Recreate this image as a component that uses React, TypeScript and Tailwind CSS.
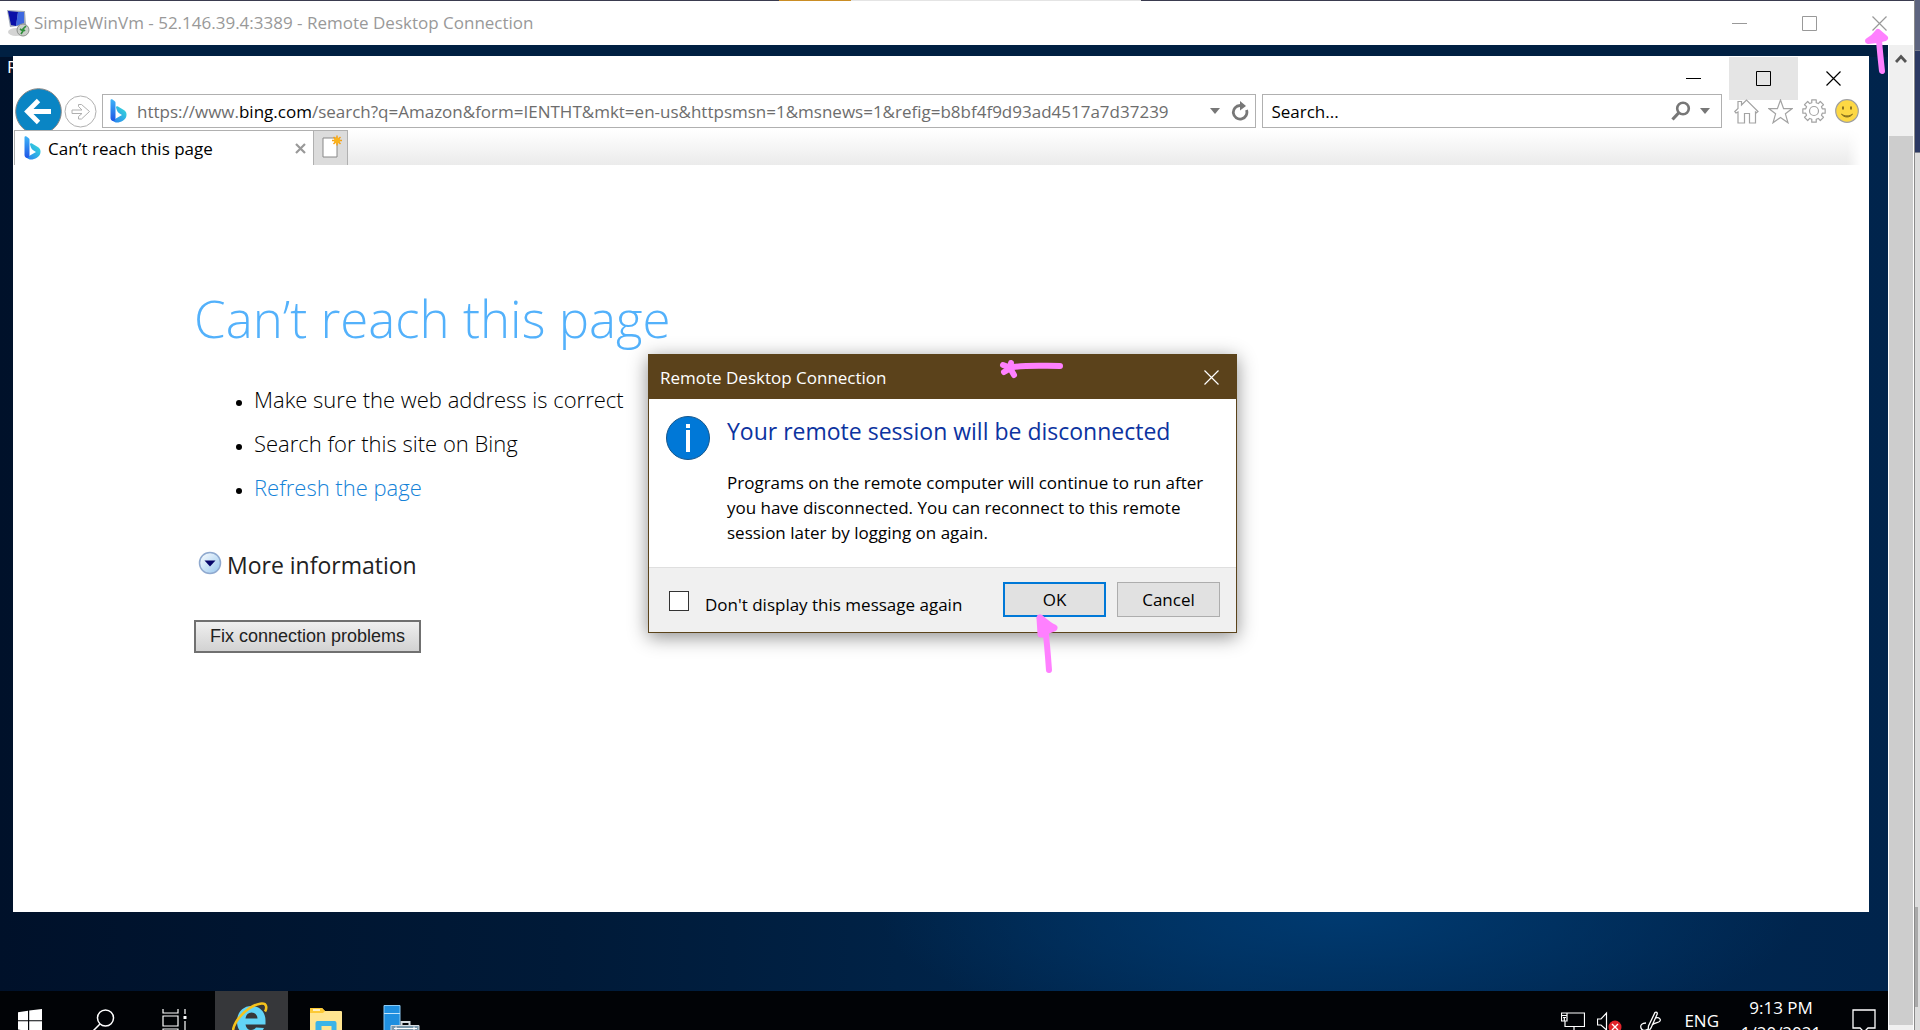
import React from "react";

const FONT = "font-['Open_Sans','Noto_Sans',sans-serif]";

function RdpIcon() {
  return (
    <svg width="24" height="28" viewBox="0 0 24 28" aria-hidden="true">
      <path d="M1 1 L19 2 L20 16 L4 18 Z" fill="#9fa8b8" />
      <path d="M2 2 L12 3 L10 17 L5 16 Z" fill="#0a10a8" />
      <path d="M12 3 L18 3 L18 14 L10 17 Z" fill="#3d67e0" />
      <ellipse cx="10" cy="23" rx="8" ry="4" fill="#d4d4d4" />
      <circle cx="17" cy="21" r="6" fill="#c9cdc9" stroke="#8d918d" />
      <path d="M14 20l3 2-2 3M20 17l-3 3 2 2" stroke="#2f8f3a" strokeWidth="1.6" fill="none" />
    </svg>
  );
}

function BingIcon() {
  return (
    <svg width="17" height="24" viewBox="0 0 17 24" aria-hidden="true">
      <defs>
        <linearGradient id="bingStem" x1="0" y1="0" x2="0" y2="1">
          <stop offset="0" stopColor="#3cb4f8" />
          <stop offset="1" stopColor="#1f55e6" />
        </linearGradient>
        <linearGradient id="bingBowl" x1="1" y1="0" x2="0" y2="1">
          <stop offset="0" stopColor="#35e0d8" />
          <stop offset="1" stopColor="#2a7cf2" />
        </linearGradient>
      </defs>
      <path d="M6 8.500 C6 7.500 7 7 8 7.600 L13 10.400 C16 12 17 14 16.400 17 C15.600 21 11 23.500 7 23.500 C3.500 23.500 1.500 21 1.500 19 L5 20 L12 16 C9 14.500 7.500 13 6.800 11 Z" fill="url(#bingBowl)" />
      <path d="M0.500 1.500 C0.500 0.300 1.500 0 2.500 0.600 L4.500 2 C5.200 2.600 5.500 3 5.500 4 L5.500 19 C5.500 21 4.500 22 3.200 22 C1.500 22 0.500 20.500 0.500 19 Z" fill="url(#bingStem)" />
    </svg>
  );
}

function Minimize() {
  return (
    <svg width="15" height="15" viewBox="0 0 15 15" aria-hidden="true">
      <path d="M0 7.500h15" stroke="currentColor" />
    </svg>
  );
}

function Maximize() {
  return (
    <svg width="15" height="15" viewBox="0 0 15 15" aria-hidden="true">
      <path d="M0.500 0.500h14v14h-14z" stroke="currentColor" fill="none" />
    </svg>
  );
}

function Close() {
  return (
    <svg width="15" height="15" viewBox="0 0 15 15" aria-hidden="true">
      <path d="M0.500 0.500l14 14M14.500 0.500l-14 14" stroke="currentColor" strokeWidth="1.2" fill="none" />
    </svg>
  );
}

function TitleBar() {
  return (
    <header className="flex h-11 shrink-0 items-center bg-white pl-1.5">
      <RdpIcon />
      <h1 className="ml-1 flex-1 truncate text-[17px] text-[#999]">
        SimpleWinVm - 52.146.39.4:3389 - Remote Desktop Connection
      </h1>
      <div className="flex h-full text-[#999]">
        <button aria-label="Minimize" className="flex w-[70px] items-center justify-center"><Minimize /></button>
        <button aria-label="Maximize" className="flex w-[70px] items-center justify-center"><Maximize /></button>
        <button aria-label="Close" className="flex w-[70px] items-center justify-center"><Close /></button>
      </div>
    </header>
  );
}

function ScrollBar() {
  return (
    <div className="flex w-[26px] shrink-0 flex-col border-x border-white bg-[#f0f0f0]">
      <button aria-label="Scroll up" className="flex h-[91px] shrink-0 justify-center pt-[9px]">
        <svg width="12" height="10" viewBox="0 0 12 10" aria-hidden="true">
          <path d="M1 8L6 2.500L11 8" stroke="#555" strokeWidth="2.800" fill="none" />
        </svg>
      </button>
      <div className="mb-[5px] flex-1 bg-[#cdcdcd]" />
    </div>
  );
}

function ToolIcons() {
  const gear = Array.from({ length: 8 }, (_, i) => {
    const a = (i * Math.PI) / 4;
    const p = (r: number, d: number) =>
      `${(12 + r * Math.cos(a + d)).toFixed(2)} ${(12 + r * Math.sin(a + d)).toFixed(2)}`;
    return `${i ? "L" : "M"}${p(8.6, -0.26)} L${p(11.4, -0.2)} L${p(11.4, 0.2)} L${p(8.6, 0.26)}`;
  }).join(" ");
  return (
    <div className="ml-3 flex shrink-0 items-center gap-[9px] pr-[10px]">
      <button aria-label="Home">
        <svg width="25" height="25" viewBox="0 0 25 25" fill="none" stroke="#a3a3a3" strokeWidth="1.200" aria-hidden="true">
          <path d="M0.800 12.500L4 9.500V2.500H7.500V6L12.500 1L24 12.500L22.500 13.800L21.500 13V24H15.500V14.500H10.500V24H4V13L2 14Z" />
        </svg>
      </button>
      <button aria-label="Favorites">
        <svg width="25" height="25" viewBox="0 0 25 25" fill="none" stroke="#a3a3a3" strokeWidth="1.200" aria-hidden="true">
          <path d="M12.500 1L15.600 9.600H24.200L17.400 14.800L20 23.800L12.500 18.500L5 23.800L7.600 14.800L0.800 9.600H9.400Z" />
        </svg>
      </button>
      <button aria-label="Settings">
        <svg width="24" height="24" viewBox="0 0 24 24" fill="none" stroke="#a3a3a3" strokeWidth="1.200" strokeLinejoin="round" aria-hidden="true">
          <path d={gear + "Z"} />
          <circle cx="12" cy="12" r="4.500" />
        </svg>
      </button>
      <button aria-label="Send feedback">
        <svg width="24" height="24" viewBox="0 0 24 24" aria-hidden="true">
          <circle cx="12" cy="12" r="11.300" fill="#fdd844" stroke="#a0a0a0" strokeWidth="1.200" />
          <path d="M8 7.500v3M16 7.500v3" stroke="#8a7320" strokeWidth="2" />
          <path d="M6.500 15c2.500 4 8.500 4 11 0c-2.500 2.500-8.500 2.500-11 0z" fill="#8a7320" stroke="#8a7320" />
        </svg>
      </button>
    </div>
  );
}

function Browser() {
  return (
    <main className="relative mb-[79px] ml-[13px] mr-[19px] mt-[11px] flex flex-1 flex-col bg-white">
      <div className="flex h-[37px] justify-end pt-px">
        <button aria-label="Minimize browser" className="flex h-[43px] w-[71px] items-center justify-center"><Minimize /></button>
        <button aria-label="Maximize browser" className="flex h-[43px] w-[69px] items-center justify-center bg-[#e5e5e5]"><Maximize /></button>
        <button aria-label="Close browser" className="flex h-[43px] w-[71px] items-center justify-center"><Close /></button>
      </div>

      <div className="relative flex h-9 items-center pl-0.5">
        <button aria-label="Back" className="-my-2 shrink-0">
          <svg width="47" height="47" viewBox="0 0 47 47" aria-hidden="true">
            <circle cx="23.500" cy="23.500" r="22.800" fill="#0a85c4" stroke="#868686" />
            <path d="M36 23.500H13M23.500 12.500L12.500 23.500L23.500 34.500" stroke="#fff" strokeWidth="4.800" fill="none" />
          </svg>
        </button>
        <button aria-label="Forward" className="ml-0.5 shrink-0">
          <svg width="33" height="33" viewBox="0 0 33 33" fill="none" stroke="#b0b0b0" aria-hidden="true">
            <circle cx="16.500" cy="16.500" r="15.500" />
            <path d="M8 15H18L14.500 11.500V9.500H17.500L25.500 16.500L17.500 24H14.500V21.500L18 18.500H8Z" />
          </svg>
        </button>
        <div className="ml-[5px] flex h-[34px] min-w-0 flex-[1154] items-center border border-[#b0b0b0] bg-white pl-[7px]">
          <BingIcon />
          <div
            role="textbox"
            aria-label="Address"
            contentEditable
            suppressContentEditableWarning
            className="ml-[10px] min-w-0 flex-1 overflow-hidden whitespace-nowrap pt-0.5 text-[17px] leading-7 text-[#6d6d6d] outline-none"
          >
            https://www.<span className="text-black">bing.com</span>/search?q=Amazon&amp;form=IENTHT&amp;mkt=en-us&amp;httpsmsn=1&amp;msnews=1&amp;refig=b8bf4f9d93ad4517a7d37239
          </div>
          <button aria-label="Show address history" className="flex w-8 justify-center">
            <svg width="10" height="6" viewBox="0 0 10 6" aria-hidden="true"><path d="M0 0h10l-5 6z" fill="#777" /></svg>
          </button>
          <button aria-label="Refresh" className="mr-1.5 shrink-0">
            <svg width="18" height="20" viewBox="0 0 18 20" aria-hidden="true">
              <path d="M9 4.500A6.800 6.800 0 1 0 15.500 9" stroke="#777" strokeWidth="2.800" fill="none" />
              <path d="M9 0L15 5L9 9.500Z" fill="#777" />
            </svg>
          </button>
        </div>
        <div className="ml-1.5 flex h-[34px] min-w-0 flex-[461] items-center border border-[#b0b0b0] bg-white">
          <input
            aria-label="Search"
            placeholder="Search..."
            className="min-w-0 flex-1 px-2 pt-0.5 text-[17px] text-black outline-none placeholder:text-black"
          />
          <button aria-label="Run search" className="shrink-0">
            <svg width="20" height="20" viewBox="0 0 20 20" fill="none" stroke="#777" aria-hidden="true">
              <circle cx="12" cy="7.500" r="5.800" strokeWidth="2.600" />
              <path d="M8 11.500L1.500 18.500" strokeWidth="3.200" />
            </svg>
          </button>
          <button aria-label="Search providers" className="ml-[9px] mr-[11px] shrink-0">
            <svg width="10" height="6" viewBox="0 0 10 6" aria-hidden="true"><path d="M0 0h10l-5 6z" fill="#777" /></svg>
          </button>
        </div>
        <ToolIcons />
      </div>

      <div className="relative mr-2 mt-px flex h-[35px] bg-white">
        <div className="ml-px flex w-[299px] items-center border-l border-t border-[#b0b0b0] bg-white pl-[9px]">
          <BingIcon />
          <span className="ml-[7px] flex-1 truncate pt-0.5 text-[17px] text-black">Can’t reach this page</span>
          <button aria-label="Close tab" className="mr-[7px]">
            <svg width="11" height="11" viewBox="0 0 11 11" aria-hidden="true">
              <path d="M1 1l9 9M10 1l-9 9" stroke="#999" strokeWidth="2.200" />
            </svg>
          </button>
        </div>
        <button aria-label="New tab" className="flex w-[35px] items-start justify-center border border-b-0 border-[#b0b0b0] bg-[#dcdcdc] pl-0.5 pt-1">
          <svg width="20" height="24" viewBox="0 0 20 24" aria-hidden="true">
            <path d="M1 3h14v19h-14z" fill="#fff" stroke="#888" />
            <path d="M15 0.500v10M10 5.500h10M11.500 2l7 7M18.500 2l-7 7" stroke="#f5a216" strokeWidth="1.500" />
            <circle cx="15" cy="5.500" r="3" fill="#fbb31c" />
          </svg>
        </button>
        <div className="flex-1 bg-linear-to-b from-white to-[#ebebeb] [mask-image:linear-gradient(90deg,#000_calc(100%-14px),transparent)]" />
      </div>

      <section className="flex flex-col items-start pl-[181px] pt-[117px]">
        <h2 className="text-[51px] font-light leading-[72px] text-[#53b1fb]">Can’t reach this page</h2>
        <ul className="mt-[23px] list-disc pl-[60px] text-[22px] font-light leading-[44px] text-black marker:text-[16px]">
          <li>Make sure the web address is correct</li>
          <li>Search for this site on Bing</li>
          <li><a href="#refresh" className="text-[#1482d8]">Refresh the page</a></li>
        </ul>
        <button className="mt-[38px] flex items-center gap-[5px] pl-1 text-[23px] leading-9 text-[#222]">
          <svg width="24" height="24" viewBox="0 0 24 24" className="mb-1" aria-hidden="true">
            <defs>
              <linearGradient id="expander" x1="0" y1="0" x2="1" y2="1">
                <stop offset="0" stopColor="#fff" />
                <stop offset="1" stopColor="#96c6ee" />
              </linearGradient>
            </defs>
            <circle cx="12" cy="12" r="10.500" fill="url(#expander)" stroke="#8fa9cf" strokeWidth="1.500" />
            <path d="M6.500 9.500h11l-5.500 6z" fill="#06066a" />
          </svg>
          More information
        </button>
        <button className="mt-[37px] h-[33px] border-2 border-[#707070] bg-linear-to-b from-[#efefef] to-[#d2d2d2] px-[14px] font-['Liberation_Sans',sans-serif] text-[18px] leading-[29px] text-[#222]">
          Fix connection problems
        </button>
      </section>
    </main>
  );
}

function Taskbar() {
  return (
    <footer className="flex h-[39px] shrink-0 items-start overflow-hidden bg-[#010306] text-white">
      <button aria-label="Start" className="flex w-[60px] justify-center pt-[18px]">
        <svg width="24" height="24" viewBox="0 0 24 24" fill="#fff" aria-hidden="true">
          <path d="M0 3.200L10 1.700V11.200H0zM11.200 1.500L24 0V11.200H11.200zM0 12.300H10V22L0 20.600zM11.200 12.300H24V24L11.200 22.200z" />
        </svg>
      </button>
      <button aria-label="Search Windows" className="flex w-[86px] justify-center pt-[18px]">
        <svg width="24" height="26" viewBox="0 0 24 26" fill="none" stroke="#fff" strokeWidth="1.500" aria-hidden="true">
          <circle cx="14.500" cy="9" r="8" /><path d="M9 15L0.500 23.500" />
        </svg>
      </button>
      <button aria-label="Task view" className="flex w-[58px] justify-center pt-[18px]">
        <svg width="26" height="24" viewBox="0 0 26 24" fill="none" stroke="#fff" strokeWidth="1.200" aria-hidden="true">
          <path d="M1 0V4H16V0M1 7H16V17H1ZM1 24V20H16V24M23 0V5M23 12V24" />
          <path d="M21.500 7h3v3h-3z" fill="#fff" stroke="none" />
        </svg>
      </button>
      <button aria-label="Internet Explorer" className="ml-[11px] flex h-full w-[73px] justify-center bg-[#36373a] pr-1 pt-[11px]">
        <svg width="36" height="36" viewBox="0 0 36 36" aria-hidden="true">
          <path d="M28.500 22.500H13.500C14 26 16 28 19 28C21.500 28 23 27 24 25.500L32 26C29.500 31 25 34 19 34C11 34 5 28.500 5 19.500C5 10.500 11 4 19.500 4C28 4 33.500 10 33.500 18.500V22.500ZM13.500 16.500H25.500C25.300 13 23 10.500 19.500 10.500C16 10.500 14 13 13.500 16.500Z" fill="#62d4f7" />
          <path d="M2 34C-2 27 6 14 17 6.500C25 1 33 0 34 4C34.500 6 34 8 33 9.500" stroke="#f6c21c" strokeWidth="2.600" fill="none" />
        </svg>
      </button>
      <button aria-label="File Explorer" className="flex w-[76px] justify-center pt-[17px]">
        <svg width="32" height="28" viewBox="0 0 32 28" aria-hidden="true">
          <path d="M0 1q0-1 1-1h11l3 3h16q1 0 1 1v24H0z" fill="#ffe590" />
          <path d="M0 1q0-1 1-1h11l3 3-2 2H0z" fill="#fcc934" />
          <path d="M3 2h7" stroke="#fff" strokeWidth="1.400" />
          <path d="M5.500 28V15q0-2 2-2h17q2 0 2 2v13h-5V18h-10v10z" fill="#3bb4e8" />
        </svg>
      </button>
      <button aria-label="Server Manager" className="flex w-[76px] justify-center pt-[14px]">
        <svg width="38" height="30" viewBox="0 0 38 30" aria-hidden="true">
          <path d="M1 0.500h16v30H1z" fill="#1f8fdf" stroke="#8ccaf3" />
          <path d="M1 8.500h16" stroke="#c3e4fa" />
          <path d="M18.500 20v-3h8v3" fill="none" stroke="#d5dbe0" strokeWidth="2" />
          <path d="M8 20.500h28v10H8z" fill="#7a98ac" stroke="#d5dbe0" />
          <path d="M11 23.500h23M13 21.500v4M31 21.500v4" stroke="#fff" />
        </svg>
      </button>
      <div className="ml-auto flex items-start">
        <button aria-label="Network" className="mt-[21px]">
          <svg width="24" height="22" viewBox="0 0 24 22" fill="none" stroke="#fff" strokeWidth="1.200" aria-hidden="true">
            <path d="M6 1H23.500V14.500H4V9M0.500 1H6V9H0.500ZM0.500 3.500H6M2 5.500h3M3.300 5.500V9M13 15v4M8 18.500h10" />
          </svg>
        </button>
        <button aria-label="Volume muted" className="ml-3 mt-5">
          <svg width="26" height="24" viewBox="0 0 26 24" aria-hidden="true">
            <path d="M0.500 8H4L9.500 2V19L4 14H0.500Z" fill="none" stroke="#fff" strokeWidth="1.200" />
            <circle cx="18" cy="16" r="6.500" fill="#e0242b" />
            <path d="M15 13l6 6M21 13l-6 6" stroke="#fff" strokeWidth="1.400" />
          </svg>
        </button>
        <button aria-label="Windows Ink Workspace" className="ml-[17px] mt-5">
          <svg width="22" height="22" viewBox="0 0 22 22" fill="none" stroke="#fff" strokeWidth="1.300" aria-hidden="true">
            <path d="M15 1.500C16 0.500 18 1.500 17 3.500L11 17L8 21L8.500 15ZM6 12C2 12 0 14 1 17C2 20 5 20 8 18M16 7C19 6 21 8 20 10C19 12 15 11 12 14" />
          </svg>
        </button>
        <button className="ml-[22px] mt-4 text-[17px] leading-7">ENG</button>
        <button className="ml-[18px] w-[88px] whitespace-nowrap pt-1 text-[17px] leading-[25px]">
          9:13 PM<br />1/20/2021
        </button>
        <button aria-label="Notifications" className="ml-[27px] mr-3 mt-[18px]">
          <svg width="24" height="26" viewBox="0 0 24 26" fill="none" stroke="#fff" strokeWidth="1.300" aria-hidden="true">
            <path d="M1 1H23V19H16L12 23L8 19H1Z" />
          </svg>
        </button>
      </div>
    </footer>
  );
}

function Dialog() {
  return (
    <div
      role="dialog"
      aria-labelledby="dialog-title"
      className="absolute left-[648px] top-[354px] flex w-[589px] flex-col border border-[#5b431a] bg-white shadow-[0_4px_18px_rgba(0,0,0,0.45)]"
    >
      <div className="flex h-11 items-center bg-[#5b421b] pl-[11px] text-white">
        <h2 id="dialog-title" className="flex-1 pt-0.5 text-[17px]">Remote Desktop Connection</h2>
        <button aria-label="Close dialog" className="mr-[17px]"><Close /></button>
      </div>
      <div className="flex h-[168px] pl-[17px] pt-[17px]">
        <svg width="44" height="44" viewBox="0 0 44 44" className="shrink-0" aria-hidden="true">
          <circle cx="22" cy="22" r="21.500" fill="#0078d7" stroke="#14568c" />
          <path d="M20 8h4v4h-4zM20 14h4v22h-4z" fill="#fff" />
        </svg>
        <div className="ml-[17px]">
          <h3 className="text-[23px] leading-[30px] text-[#0c33a0]">Your remote session will be disconnected</h3>
          <p className="mt-6 whitespace-nowrap text-[17px] leading-[25px] text-black">
            Programs on the remote computer will continue to run after<br />
            you have disconnected. You can reconnect to this remote<br />
            session later by logging on again.
          </p>
        </div>
      </div>
      <div className="flex h-[65px] items-start border-t border-[#dfdfdf] bg-[#f0f0f0] pl-5 pr-4 pt-[14px]">
        <label className="flex flex-1 items-center gap-4 whitespace-nowrap pt-[9px] text-[17px] leading-7 text-black">
          <input type="checkbox" className="mb-2 size-5 shrink-0 appearance-none border border-[#333] bg-white checked:bg-[#0078d7]" />
          Don't display this message again
        </label>
        <button className="h-[35px] w-[103px] border-2 border-[#0078d7] bg-[#e1e1e1] text-[17px] text-black">OK</button>
        <button className="ml-[11px] h-[35px] w-[103px] border border-[#adadad] bg-[#e1e1e1] text-[17px] text-black">Cancel</button>
      </div>
    </div>
  );
}

function PenMarks() {
  return (
    <>
      <svg className="pointer-events-none absolute left-[1860px] top-[28px]" width="36" height="48" viewBox="0 0 36 48" fill="none" stroke="#ff80ff" strokeLinecap="round" strokeLinejoin="round" aria-hidden="true">
        <path d="M19 12C20 25 21 34 22 43" strokeWidth="6" />
        <path d="M8 13C12 11 15 8 18 4L25 10L17 12Z" strokeWidth="6" fill="#ff80ff" />
      </svg>
      <svg className="pointer-events-none absolute left-[998px] top-[356px]" width="68" height="24" viewBox="0 0 68 24" fill="none" stroke="#ff80ff" strokeLinecap="round" strokeLinejoin="round" aria-hidden="true">
        <path d="M15 11C30 9 45 10 62 10" strokeWidth="6" />
        <path d="M5 9L13 12L6 16M13 7L12 12L16 19" strokeWidth="6" />
      </svg>
      <svg className="pointer-events-none absolute left-[1034px] top-[612px]" width="28" height="66" viewBox="0 0 28 66" fill="none" stroke="#ff80ff" strokeLinecap="round" strokeLinejoin="round" aria-hidden="true">
        <path d="M11 14C13 30 14 44 15 58" strokeWidth="6" />
        <path d="M6 6L7 22M6 6C10 9 14 13 20 16L12 19L8 22" strokeWidth="7" />
      </svg>
    </>
  );
}

export default function App() {
  return (
    <div className={`relative flex h-screen w-full overflow-hidden bg-[#3a3b4f] ${FONT}`}>
      <div className="flex min-w-0 flex-1 flex-col">
        <div className="flex h-px shrink-0 bg-[#3a3b4f]">
          <div className="ml-[779px] h-0.5 w-[72px] bg-[#ca8d24]" />
          <div className="h-0.5 w-[290px] bg-[#e4e4e4]" />
        </div>
        <TitleBar />
        <div className="flex min-h-0 flex-1">
          <div className="relative flex min-w-0 flex-1 flex-col overflow-hidden bg-[#001f42] bg-[radial-gradient(ellipse_460px_130px_at_1340px_870px,#003a70,transparent),linear-gradient(90deg,#00112a,#001a38_30%,#002a54_65%,#00244c)]">
            <div className="absolute inset-x-0 top-0 h-3 bg-[#002042]" />
            <span className="absolute left-[7px] top-[10px] text-[17px] leading-6 text-white">Recycle Bin</span>
            <Browser />
            <Taskbar />
          </div>
          <ScrollBar />
        </div>
      </div>
      <div className="flex w-1.5 shrink-0 flex-col border-l border-[#8a8a8a] bg-[#dcdcdc]">
        <div className="h-[50px] bg-[#5d647f]" />
        <div className="h-[103px] border-y border-[#7b7f8e] bg-[#2c3963]" />
        <div className="flex-1" />
        <div className="mb-[23px] mr-0.5 h-[100px] bg-[#a9a9a9]" />
      </div>
      <Dialog />
      <PenMarks />
    </div>
  );
}
